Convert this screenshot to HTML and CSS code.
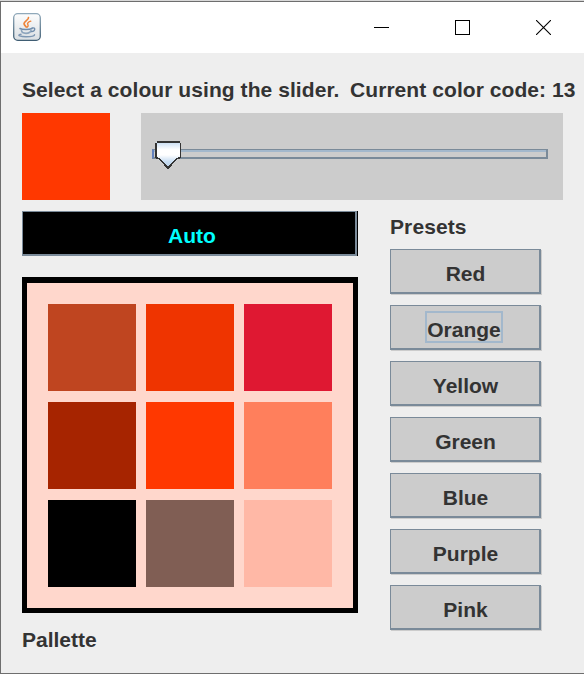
FILE: index.html
```html
<!DOCTYPE html>
<html lang="en">
<head>
<meta charset="utf-8">
<title>Colour picker</title>
<link rel="stylesheet" href="styles.css">
</head>
<body>
<div class="window">
  <header class="titlebar">
    <svg class="app-icon" width="28" height="28" viewBox="0 0 28 28">
      <defs><linearGradient id="tile" x1="0" y1="0" x2="0" y2="1"><stop offset="0" stop-color="#fdfdfd"/><stop offset="1" stop-color="#dadfe3"/></linearGradient>
      <linearGradient id="edge" x1="0" y1="0" x2="0" y2="1"><stop offset="0" stop-color="#90a9ba"/><stop offset="1" stop-color="#3f5d73"/></linearGradient></defs>
      <rect x=".7" y=".7" width="26.6" height="26.6" rx="4" fill="url(#tile)" stroke="url(#edge)" stroke-width="1.3"/>
      <g fill="none" stroke-linecap="round">
        <path d="M15.500 4.500c.5 2.500-4.700 3.600-4.500 6.300.1 1.200 1.400 2 2.200 3.200" stroke="#ee8338" stroke-width="1.700"/>
        <path d="M17.800 8.200c-2.500.8-4 2-2.900 3.400.6.900.3 1.700-.5 2.500" stroke="#ee8338" stroke-width="1.400"/>
        <path d="M7 15.500c2 1.300 9.500 1.300 12 0" stroke="#6f8cab" stroke-width="1.500"/>
        <path d="M8.500 17.500c.3 3.700 8.500 3.700 9.500 0" stroke="#8da5bd" stroke-width="1.700"/>
        <path d="M19.200 15c3.800-.8 3.200 3-.7 3.600" stroke="#6f8cab" stroke-width="1.300"/>
        <path d="M8 21.300c-5 1 0 2.400 5 2.400s8.500-.6 8.500-2" stroke="#7d97b3" stroke-width="1.500"/>
      </g>
    </svg>
    <div class="controls">
      <svg width="15" height="15" viewBox="0 0 15 15" shape-rendering="crispEdges"><path d="M0 7.500h15" stroke="#000"/></svg>
      <svg width="15" height="15" viewBox="0 0 15 15" shape-rendering="crispEdges"><path d="M.5.5h14v14H.5z" fill="none" stroke="#000"/></svg>
      <svg width="15" height="15" viewBox="0 0 15 15"><path d="M0 0l15 15M15 0L0 15" stroke="#000" stroke-width="1.100"/></svg>
    </div>
  </header>
  <main class="content">
    <div class="labels"><span class="hint">Select a colour using the slider.</span><span class="code">Current color code: 13</span></div>
    <div class="picker">
      <div class="current"></div>
      <div class="slider">
        <div class="track"></div>
        <svg class="thumb" width="26" height="28" viewBox="0 0 26 28">
          <defs><linearGradient id="knob" x1="0" y1="0" x2="0" y2="1"><stop offset="0" stop-color="#c8ddf2"/><stop offset=".3" stop-color="#fff"/><stop offset=".5" stop-color="#fff"/><stop offset=".75" stop-color="#c8ddf2"/><stop offset="1" stop-color="#b8cfe5"/></linearGradient></defs>
          <path d="M1 1h24v15L13 27 1 16z" fill="url(#knob)"/>
          <g shape-rendering="crispEdges" fill="#333"><path d="M2 0h23v2H2zM0 2h2v14H0zM25 2h1v14h-1z"/></g>
          <path d="M1 16l1.500 1.500h1.500L13 27l9-9.500h1.500L25.500 16" fill="none" stroke="#333" stroke-width="1.700" shape-rendering="crispEdges"/>
        </svg>
      </div>
    </div>
    <div class="columns">
      <section class="left">
        <button class="auto">Auto</button>
        <div class="palette">
          <i class="rust"></i><i class="vermilion"></i><i class="crimson"></i>
          <i class="brick"></i><i class="orange"></i><i class="coral"></i>
          <i class="black"></i><i class="umber"></i><i class="peach"></i>
        </div>
        <div class="caption">Pallette</div>
      </section>
      <section class="presets">
        <div class="heading">Presets</div>
        <button>Red</button>
        <button class="focused"><span>Orange</span></button>
        <button>Yellow</button>
        <button>Green</button>
        <button>Blue</button>
        <button>Purple</button>
        <button>Pink</button>
      </section>
    </div>
  </main>
</div>
</body>
</html>
```
FILE: styles.css
```css
* { box-sizing: border-box; }
body { margin: 0; background: #d8d8d8; font: bold 21px/24px "Liberation Sans", Arial, sans-serif; color: #333; overflow: hidden; }
svg { display: block; flex: none; }
.window { width: 584px; height: 673px; margin-top: 1px; border: solid #6e6e6e; border-width: 1px 0 1px 1px; background: #eee; }
.titlebar { display: flex; justify-content: space-between; height: 51px; padding: 11px 33px 0 12px; background: #fff; }
.controls { display: flex; gap: 66px; padding-top: 7px; }
.content { padding: 25px 0 0 21px; }
.labels { display: flex; height: 35px; white-space: pre; }
.hint { width: 328px; letter-spacing: .07px; }
.code { letter-spacing: .07px; }
.picker { display: flex; gap: 31px; }
.current { width: 88px; height: 87px; background: #ff3800; }
.slider { position: relative; width: 422px; height: 87px; padding: 36px 15px 0 11px; background: #ccc; }
.track { display: flex; height: 10px; border: solid #7a8a99; border-width: 1px 2px 2px; border-left-color: #6382bf; box-shadow: inset 0 2px #a3b8cc; }
.thumb { position: absolute; left: 14px; top: 28px; }
.columns { display: flex; gap: 32px; padding-top: 11px; }
.left { width: 336px; }
button { display: block; width: 151px; height: 45px; margin: 0 0 11px; padding: 6px 0 0 1px; border: solid #7a8a99; border-width: 1px 2px 2px 1px; background: #ccc; color: #333; font: inherit; box-shadow: 1px 1px #ccc; }
.auto { width: 335px; margin-bottom: 21px; padding-left: 6px; background: #000; color: #0ff; box-shadow: 1px 0 #000; }
.palette { display: grid; grid-template-columns: repeat(3, 88px); grid-template-rows: repeat(3, 87px); gap: 11px 10px; height: 336px; padding: 21px; border: 5px solid #000; border-top-width: 6px; background: #ffd7cc; }
.rust { background: #bf4520; }
.vermilion { background: #ef3400; }
.crimson { background: #df1832; }
.brick { background: #a62400; }
.orange { background: #ff3800; }
.coral { background: #ff7f5c; }
.black { background: #000; }
.umber { background: #805e54; }
.peach { background: #ffb8a6; }
.caption { padding-top: 15px; }
.heading { height: 38px; padding-top: 4px; letter-spacing: .1px; }
.focused { padding-left: 0; }
.focused span { display: block; width: 78px; height: 32px; margin: -6px 0 0 34px; padding-top: 5px; border: 2px solid #a3b8cc; }
```
